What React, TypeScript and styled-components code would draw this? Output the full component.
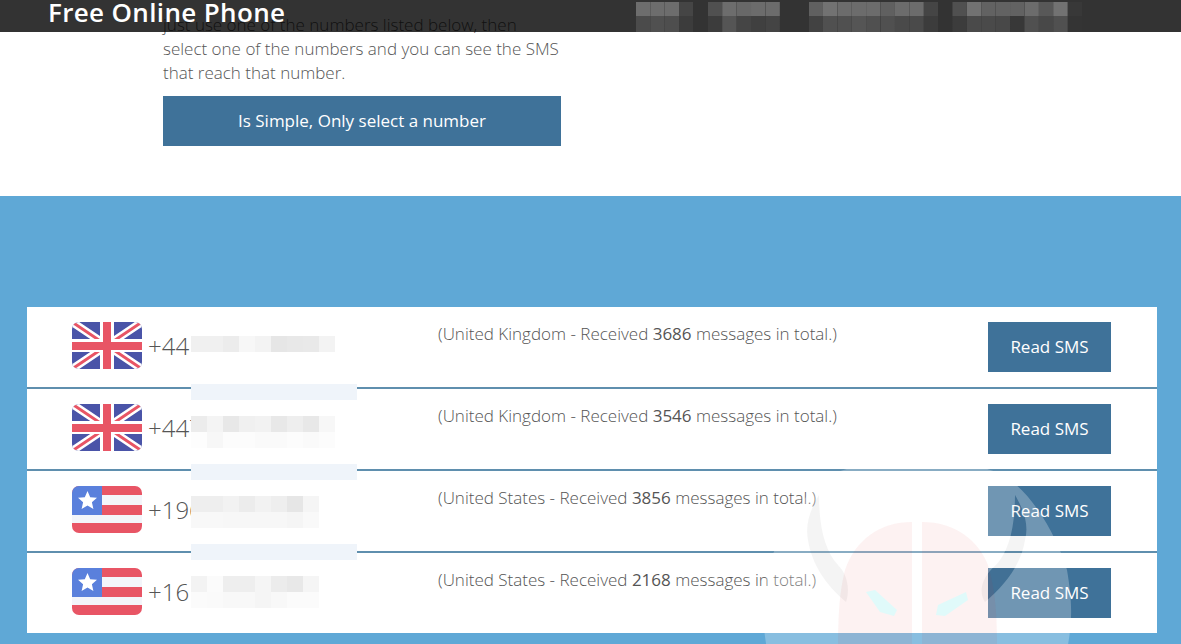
import styled, { createGlobalStyle } from "styled-components";

const GlobalStyle = createGlobalStyle`
  html, body {
    margin: 0;
    padding: 0;
    background: #fff;
  }
  body {
    font-family: "Open Sans", "Liberation Sans", sans-serif;
    color: #555;
  }
`;

const Page = styled.div`
  position: relative;
  width: 1181px;
  height: 644px;
  overflow: hidden;
`;

const Header = styled.header`
  position: absolute;
  top: 0;
  left: 0;
  right: 0;
  height: 32px;
  background: rgba(0, 0, 0, 0.8);
  display: flex;
  align-items: flex-start;
  padding-left: 48px;
  z-index: 5;
`;

const Title = styled.div`
  color: #fff;
  font-size: 26px;
  font-weight: 600;
  line-height: 24px;
  letter-spacing: 0.35px;
  white-space: nowrap;
`;

const NavBlur = styled.nav`
  display: flex;
  margin-left: auto;
  margin-right: 99px;
  gap: 14.4px;
`;

const NavGroup = styled.div<{ $gap?: number }>`
  display: flex;
  margin-right: ${(p) => p.$gap ?? 0}px;
`;

const NavCell = styled.div<{ $top: string; $bottom: string }>`
  width: 14.4px;
  height: 32px;
  background: linear-gradient(
    ${(p) => p.$top} 0 16px,
    ${(p) => p.$bottom} 16px 32px
  );
  clip-path: inset(2px 0 0 0);
`;

const Intro = styled.section`
  padding: 13px 0 50px 163px;
`;

const IntroText = styled.p`
  margin: 0 0 11px;
  width: 398px;
  font-size: 17px;
  font-weight: 300;
  line-height: 24px;
`;

const IntroButton = styled.div`
  width: 398px;
  height: 50px;
  box-sizing: border-box;
  padding-bottom: 2px;
  background: #3f7299;
  color: #fff;
  font-size: 17px;
  display: flex;
  align-items: center;
  justify-content: center;
`;

const Numbers = styled.section`
  background: #5fa8d6;
  padding: 111px 24px 11px 27px;
`;

const Row = styled.div`
  position: relative;
  display: flex;
  align-items: flex-start;
  height: 82px;
  box-sizing: border-box;
  padding-top: 15px;
  background: #fff;
  border-bottom: 2px solid #5f8fae;

  &:last-child {
    height: 80px;
    border-bottom: 0;
  }
`;

const NumberCell = styled.div`
  width: 411px;
  padding-left: 45px;
  box-sizing: border-box;
  display: flex;
  align-items: center;
  gap: 6px;
  height: 47px;
`;

const PhoneNumber = styled.span`
  font-size: 24px;
  font-weight: 300;
  color: #555;
`;

const Mosaic = styled.div<{ $top: number }>`
  position: absolute;
  left: 164px;
  top: ${(p) => p.$top}px;
  display: grid;
  grid-template-columns: repeat(9, 16px);
  grid-auto-rows: 16px;
  background: #fff;
`;

const MosaicCell = styled.div<{ $shade: string }>`
  background: ${(p) => p.$shade};
`;

const DividerPatch = styled.div<{ $top: number }>`
  position: absolute;
  left: 164px;
  top: ${(p) => p.$top}px;
  width: 166px;
  height: 16px;
  background: #eff4fa;
`;

const Info = styled.div`
  flex: 1;
  font-size: 17px;
  font-weight: 300;
  line-height: 24px;
  color: #555;

  b {
    font-weight: 400;
  }
`;

const ReadButton = styled.div`
  width: 123px;
  height: 50px;
  box-sizing: border-box;
  padding-bottom: 2px;
  margin-right: 46px;
  background: #3f7299;
  color: #fff;
  font-size: 17px;
  display: flex;
  align-items: center;
  justify-content: center;
`;

const Watermark = styled.svg`
  position: absolute;
  left: 760px;
  top: 460px;
  pointer-events: none;
  z-index: 3;
`;

const UkFlag = () => (
  <svg width="70" height="47" viewBox="0 0 70 47" style={{ flex: "none" }}>
    <defs>
      <clipPath id="uk-clip">
        <rect width="70" height="47" rx="7" />
      </clipPath>
    </defs>
    <g clipPath="url(#uk-clip)">
      <rect width="70" height="47" fill="#4a54a8" />
      <path d="M0 0L70 47M70 0L0 47" stroke="#fff" strokeWidth="8" />
      <path d="M0 0L70 47M70 0L0 47" stroke="#e85565" strokeWidth="3" />
      <rect x="28" width="14" height="47" fill="#fff" />
      <rect y="17" width="70" height="13" fill="#fff" />
      <rect x="31" width="8" height="47" fill="#e85565" />
      <rect y="20" width="70" height="8" fill="#e85565" />
    </g>
  </svg>
);

const UsFlag = () => (
  <svg width="70" height="47" viewBox="0 0 70 47" style={{ flex: "none" }}>
    <defs>
      <clipPath id="us-clip">
        <rect width="70" height="47" rx="7" />
      </clipPath>
    </defs>
    <g clipPath="url(#us-clip)">
      <rect width="70" height="47" fill="#e85565" />
      <rect y="9" width="70" height="10" fill="#f3f5fa" />
      <rect y="29" width="70" height="8" fill="#f3f5fa" />
      <rect width="30" height="29" fill="#5a80dc" />
      <polygon
        points="15.5,5 18.2,11.2 25,11.8 19.9,16.3 21.4,23 15.5,19.5 9.6,23 11.1,16.3 6,11.8 12.8,11.2"
        fill="#fff"
      />
    </g>
  </svg>
);

const navGroups = [
  { top: ["#6d6d6d", "#6d6d6d", "#6d6d6d", "#454545"], bottom: ["#4b4b4b", "#505050", "#4e4e4e", "#3c3c3c"], gap: 0 },
  { top: ["#505050", "#6d6d6d", "#686868", "#6c6c6c", "#6c6c6c"], bottom: ["#3c3c3c", "#555555", "#454545", "#404040", "#444444"], gap: 14.4 },
  {
    top: ["#606060", "#727272", "#6c6c6c", "#6c6c6c", "#6c6c6c", "#606060", "#6c6c6c", "#6c6c6c", "#454545"],
    bottom: ["#424242", "#505050", "#505050", "#555555", "#505050", "#505050", "#4a4a4a", "#4a4a4a", "#3c3c3c"],
    gap: 0,
  },
  {
    top: ["#505050", "#727272", "#626262", "#626262", "#626262", "#6c6c6c", "#585858", "#727272", "#383838"],
    bottom: ["#3c3c3c", "#4a4a4a", "#4a4a4a", "#484848", "#383838", "#505050", "#484848", "#505050", "#343434"],
    gap: 0,
  },
];

const rows = [
  {
    flag: "uk",
    prefix: "+44",
    country: "United Kingdom",
    count: 3686,
    mosaicTop: 29,
    patchTop: null,
    shades: [
      "#f0f0f0", "#f0f0f0", "#ececec", "#f7f7f7", "#f3f3f3", "#e6e6e6", "#e8e8e8", "#e9e9e9", "#f3f3f3",
      "#fff", "#fff", "#fff", "#fff", "#fff", "#fff", "#fff", "#fff", "#fff",
    ],
  },
  {
    flag: "uk",
    prefix: "+447",
    country: "United Kingdom",
    count: 3546,
    mosaicTop: 27,
    patchTop: -5,
    shades: [
      "#ececec", "#f4f4f4", "#e8e8e8", "#f0f0f0", "#f2f2f2", "#e8e8e8", "#eeeeee", "#e8e8e8", "#f7f7f7",
      "#fdfdfd", "#f7f7f7", "#fcfcfc", "#fcfcfc", "#fafafa", "#fafafa", "#fcfcfc", "#fafafa", "#fcfcfc",
    ],
  },
  {
    flag: "us",
    prefix: "+196",
    country: "United States",
    count: 3856,
    mosaicTop: 25,
    patchTop: -7,
    shades: [
      "#eeeeee", "#eeeeee", "#f2f2f2", "#ececec", "#f2f2f2", "#eeeeee", "#e6e6e6", "#f5f5f5", "#fff",
      "#f8f8f8", "#f8f8f8", "#f7f7f7", "#f7f7f7", "#f7f7f7", "#f7f7f7", "#f5f5f5", "#f9f9f9", "#fff",
    ],
  },
  {
    flag: "us",
    prefix: "+16",
    country: "United States",
    count: 2168,
    mosaicTop: 23,
    patchTop: -9,
    shades: [
      "#f3f3f3", "#fbfbfb", "#eeeeee", "#eeeeee", "#f5f5f5", "#ececec", "#e8e8e8", "#f5f5f5", "#fff",
      "#fbfbfb", "#fafafa", "#f8f8f8", "#f8f8f8", "#f5f5f5", "#f8f8f8", "#fbfbfb", "#fbfbfb", "#fff",
    ],
  },
];

export default function App() {
  return (
    <Page>
      <GlobalStyle />
      <Header>
        <Title>Free Online Phone</Title>
        <NavBlur>
          {navGroups.map((group, i) => (
            <NavGroup key={i} $gap={group.gap}>
              {group.top.map((top, j) => (
                <NavCell key={j} $top={top} $bottom={group.bottom[j]} />
              ))}
            </NavGroup>
          ))}
        </NavBlur>
      </Header>

      <Intro>
        <IntroText>
          just use one of the numbers listed below, then select one of the numbers and you can see the SMS that reach
          that number.
        </IntroText>
        <IntroButton>Is Simple, Only select a number</IntroButton>
      </Intro>

      <Numbers>
        {rows.map((row, i) => (
          <Row key={i}>
            <NumberCell>
              {row.flag === "uk" ? <UkFlag /> : <UsFlag />}
              <PhoneNumber>{row.prefix}</PhoneNumber>
            </NumberCell>
            <Mosaic $top={row.mosaicTop}>
              {row.shades.map((shade, j) => (
                <MosaicCell key={j} $shade={shade} />
              ))}
            </Mosaic>
            {row.patchTop !== null && <DividerPatch $top={row.patchTop} />}
            <Info>
              ({row.country} - Received <b>{row.count}</b> messages in total.)
            </Info>
            <ReadButton>Read SMS</ReadButton>
          </Row>
        ))}
      </Numbers>

      <Watermark width="421" height="184" viewBox="760 460 421 184">
        <path
          fillRule="evenodd"
          fill="#fff"
          fillOpacity="0.26"
          d="M917 460C960 460 1000 468 1015 484C1040 505 1060 545 1067 570C1072 600 1073 620 1067 650L767 650C762 620 762 600 766 575C774 545 794 505 819 484C834 468 874 460 917 460Z
             M1015 495C1024 510 1029 525 1025 540C1021 565 1005 585 985 602C977 590 984 575 996 565C1008 552 1015 530 1015 495Z"
        />
        <path
          fill="#606060"
          fillOpacity="0.07"
          d="M1015 495C1024 510 1029 525 1025 540C1021 565 1005 585 985 602C977 590 984 575 996 565C1008 552 1015 530 1015 495Z"
        />
        <path
          fill="#606060"
          fillOpacity="0.07"
          d="M819 495C810 510 805 525 808 540C812 565 826 585 846 602C850 590 848 575 838 565C826 552 819 530 819 495Z"
        />
        <path fill="#e02020" fillOpacity="0.06" d="M912 522C880 522 855 540 845 570C840 590 838 610 838 650L912 650Z" />
        <path fill="#e02020" fillOpacity="0.06" d="M922 522C955 522 978 540 988 565C995 590 997 610 997 650L922 650Z" />
        <path fill="#e0fafa" d="M866 592L875 590L897 610L894 616L880 612Z" />
        <path fill="#e0fafa" d="M966 592L968 600L945 616L936 615L938 605Z" />
      </Watermark>
    </Page>
  );
}
